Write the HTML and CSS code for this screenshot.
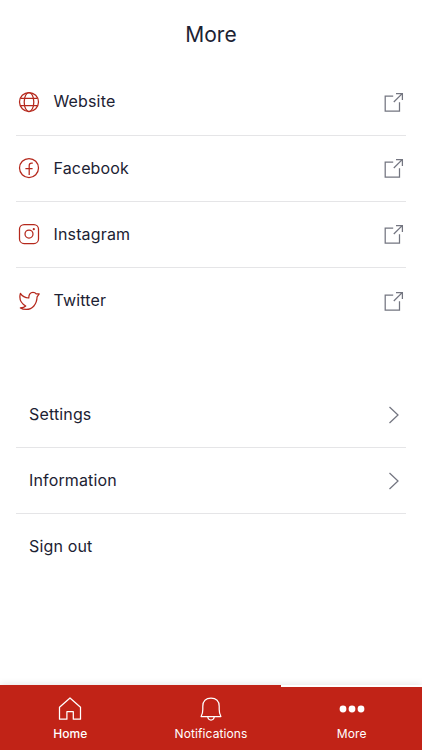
FILE: index.html
```html
<!DOCTYPE html>
<html lang="en">
<head>
<meta charset="utf-8">
<title>More</title>
<link rel="stylesheet" href="styles.css">
</head>
<body>
<svg class="symbols" aria-hidden="true">
  <symbol id="external" viewBox="0 0 20 20"><path d="M9.200 4.200H1.200v14.800h14.300v-8.700M9.800 10 18.200 1.600M12 1.600h6.400v6.400"/></symbol>
  <symbol id="chevron" viewBox="0 0 12 18"><path d="m1.500 1 8.500 8-8.500 8"/></symbol>
</svg>
<div class="screen">
  <header class="header"><h1 class="title">More</h1></header>
  <main class="content">
    <ul class="list">
      <li class="row">
        <svg class="brand" viewBox="0 0 22 22"><circle cx="11" cy="11" r="9.500"/><ellipse cx="11" cy="11" rx="4.800" ry="9.500"/><path d="M2.600 7.300h16.800M2.600 14.700h16.800"/></svg>
        <span class="label">Website</span>
        <svg class="external"><use href="#external"/></svg>
      </li>
      <li class="row">
        <svg class="brand" viewBox="0 0 22 22"><circle cx="11" cy="11" r="9.500"/><path d="M14.800 6.200h-1.200c-1.600 0-2.400.8-2.400 2.400v9.400M7.400 11.600h7.200"/></svg>
        <span class="label">Facebook</span>
        <svg class="external"><use href="#external"/></svg>
      </li>
      <li class="row">
        <svg class="brand" viewBox="0 0 22 22"><rect x="1.500" y="1.500" width="19" height="19" rx="4.600"/><circle cx="11" cy="11" r="4"/><circle class="dot" cx="15.800" cy="6.200" r="1.100"/></svg>
        <span class="label">Instagram</span>
        <svg class="external"><use href="#external"/></svg>
      </li>
      <li class="row">
        <svg class="brand" viewBox="0 0 22 22"><path d="M2.400 3.400C4.200 6.300 7 7.800 10.800 8C10.700 4.600 12.300 2.400 15 2.400c1.400 0 2.500.5 3.200 1.500H21.200L19.100 6.800C18.800 14.500 14.400 19.400 8.300 19.400c-2.500 0-4.400-.5-5.900-1.500 2.500 0 4.100-.5 5.300-1.900C2.800 13.200 .9 8.900 2.400 3.400Z"/></svg>
        <span class="label">Twitter</span>
        <svg class="external"><use href="#external"/></svg>
      </li>
    </ul>
    <ul class="list list-account">
      <li class="row"><span class="label">Settings</span><svg class="chevron"><use href="#chevron"/></svg></li>
      <li class="row"><span class="label">Information</span><svg class="chevron"><use href="#chevron"/></svg></li>
      <li class="row"><span class="label">Sign out</span></li>
    </ul>
  </main>
  <nav class="tabs">
    <a class="tab tab-home"><svg class="tab-icon" viewBox="0 0 24 24"><path d="M1.500 10.300 12 1l10.500 9.300V22.200h-7.200v-7.500H8.900v7.500H1.500Z"/></svg><span>Home</span></a>
    <a class="tab"><svg class="tab-icon" viewBox="0 0 24 24"><path d="M2.100 19.500c1.200-2 1.700-3.600 1.700-7V9.200c0-5 3.100-8.200 8.200-8.200s8.200 3.200 8.200 8.200v3.300c0 3.400.5 5 1.700 7ZM8.700 19.500c.2 2.200 1.400 3.500 3.300 3.500s3.100-1.300 3.300-3.500"/></svg><span>Notifications</span></a>
    <a class="tab tab-more"><svg class="dots" viewBox="0 0 26 24"><circle cx="4" cy="12" r="3.400"/><circle cx="13" cy="12" r="3.400"/><circle cx="22" cy="12" r="3.400"/></svg><span>More</span></a>
  </nav>
</div>
</body>
</html>
```
FILE: styles.css
```css
* { box-sizing: border-box; }
body { margin: 0; background: #fff; color: #1c2233; font-family: Inter, sans-serif; }
.symbols { display: none; }
.screen { display: flex; flex-direction: column; height: 750px; overflow: hidden; }
.header { height: 69.500px; display: flex; justify-content: center; }
.title { margin: 22px 0 0; font-size: 21px; line-height: 26px; font-weight: 400; }
.content { flex: 1; padding: 0 16px; }
.list { margin: 0; padding: 0; list-style: none; }
.list-account { margin-top: 47.800px; }
.row { display: flex; align-items: center; height: 66.200px; padding: 0 2px; border-bottom: 1px solid #e5e5e7; }
.row:last-child { border-bottom-color: transparent; }
.list-account .row { padding: 0 6px 0 13px; }
.label { flex: 1; padding-bottom: 1.500px; font-size: 16px; line-height: 24px; letter-spacing: .15px; }
svg { fill: none; stroke-linejoin: round; }
.brand { width: 22px; height: 22px; margin-right: 13.500px; stroke: #b5281c; stroke-width: 1.250; }
.brand .dot { fill: #b5281c; stroke: none; }
.external { width: 20px; height: 20px; stroke: #737580; stroke-width: 1.250; stroke-linejoin: miter; }
.chevron { width: 12px; height: 18px; stroke: #737580; stroke-width: 1.250; stroke-linejoin: miter; }
.tabs { display: flex; height: 65.500px; background: linear-gradient(#fff 0 2px, #c12317 2px); box-shadow: 0 -1px 7px rgba(0, 0, 0, .1); }
.tab { flex: 1; display: flex; flex-direction: column; align-items: center; padding-top: 12px; background: #c12317; color: #fff; font-size: 12px; line-height: 18px; letter-spacing: .1px; }
.tab-home { font-weight: 500; }
.tab-more { background: none; }
.tab-icon { width: 24px; height: 24px; margin-bottom: 4px; stroke: #fff; stroke-width: 1.250; }
.dots { width: 26px; height: 24px; margin-bottom: 4px; fill: #fff; }
```
